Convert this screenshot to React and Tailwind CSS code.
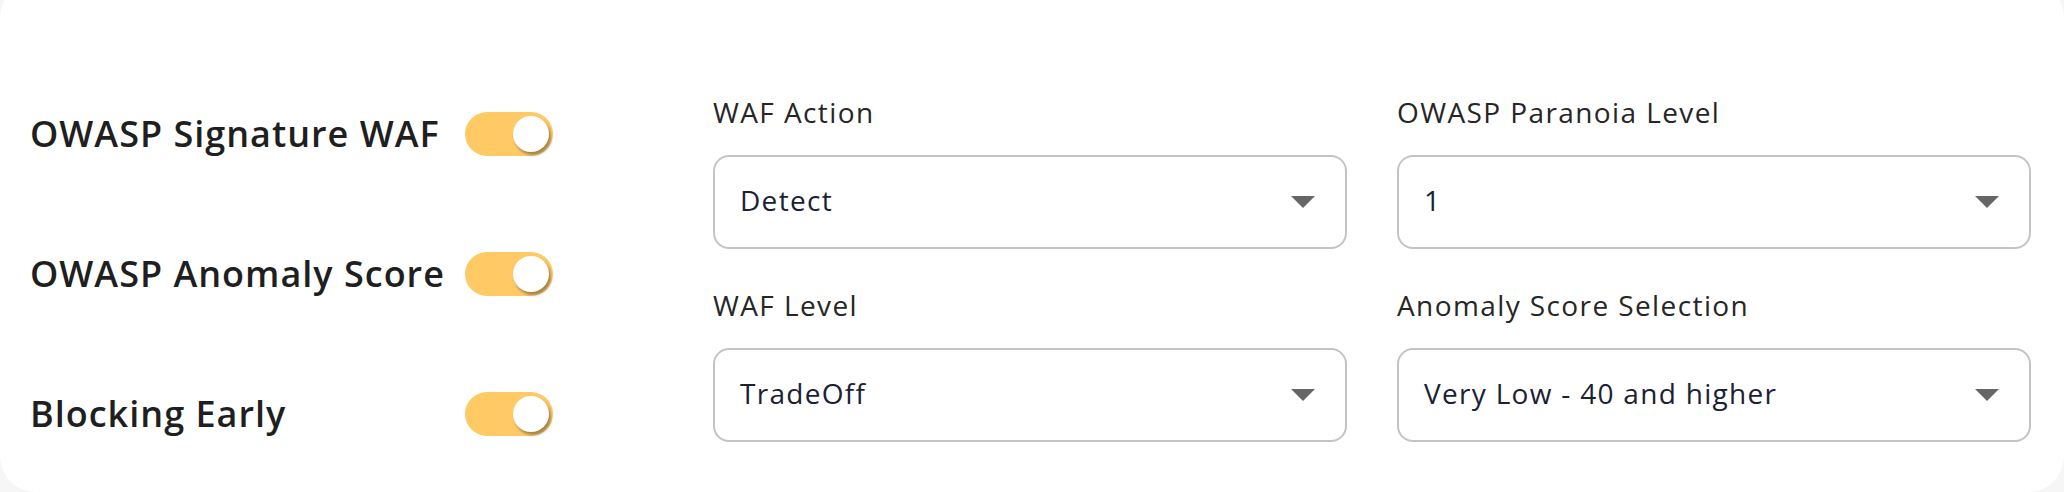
import React from "react";

function Toggle() {
  return (
    <div className="relative w-[88px] h-[44px] rounded-full bg-[#FFC966] shrink-0">
      <div className="absolute right-[4px] top-[4px] w-[36px] h-[36px] rounded-full bg-white shadow-[2px_3px_3px_rgba(0,0,0,0.35)]" />
    </div>
  );
}

function Select({ label, value }) {
  return (
    <div className="flex flex-col">
      <div className="h-[32px] leading-[32px] text-[28px] tracking-[1.4px] text-[#262626] whitespace-nowrap">{label}</div>
      <div className="mt-[27px] h-[94px] border-2 border-[#c4c4c4] rounded-[16px] pl-[25px] pr-[30px] flex items-center justify-between bg-white">
        <span className="mb-[5px] text-[28px] tracking-[1.3px] text-[#1b2133] whitespace-nowrap">{value}</span>
        <svg width="24" height="12" viewBox="0 0 24 12">
          <path d="M0 0 H24 L12 12 Z" fill="#666666" />
        </svg>
      </div>
    </div>
  );
}

function ToggleRow({ label }) {
  return (
    <div className="h-[140px] flex items-center">
      <div className="w-[435px] text-[36px] leading-[44px] font-semibold text-[#1f1f1f] whitespace-nowrap tracking-[1px]">{label}</div>
      <Toggle />
    </div>
  );
}

export default function App() {
  return (
    <div className="w-[2064px] h-[492px] bg-[#f6f6f6] overflow-hidden" style={{ fontFamily: "'Open Sans', Lato, sans-serif" }}>
      <div className="w-[2064px] h-[510px] bg-white rounded-[36px] -mt-[18px] flex px-[30px] pt-[18px]">
        <div className="flex flex-col pt-[64px]">
          <ToggleRow label="OWASP Signature WAF" />
          <ToggleRow label="OWASP Anomaly Score" />
          <ToggleRow label="Blocking Early" />
        </div>
        <div className="ml-[160px] w-[1318px] pt-[96px] grid grid-cols-2 gap-x-[50px] gap-y-[40px] content-start">
          <Select label="WAF Action" value="Detect" />
          <Select label="OWASP Paranoia Level" value="1" />
          <Select label="WAF Level" value="TradeOff" />
          <Select label="Anomaly Score Selection" value="Very Low - 40 and higher" />
        </div>
      </div>
    </div>
  );
}
